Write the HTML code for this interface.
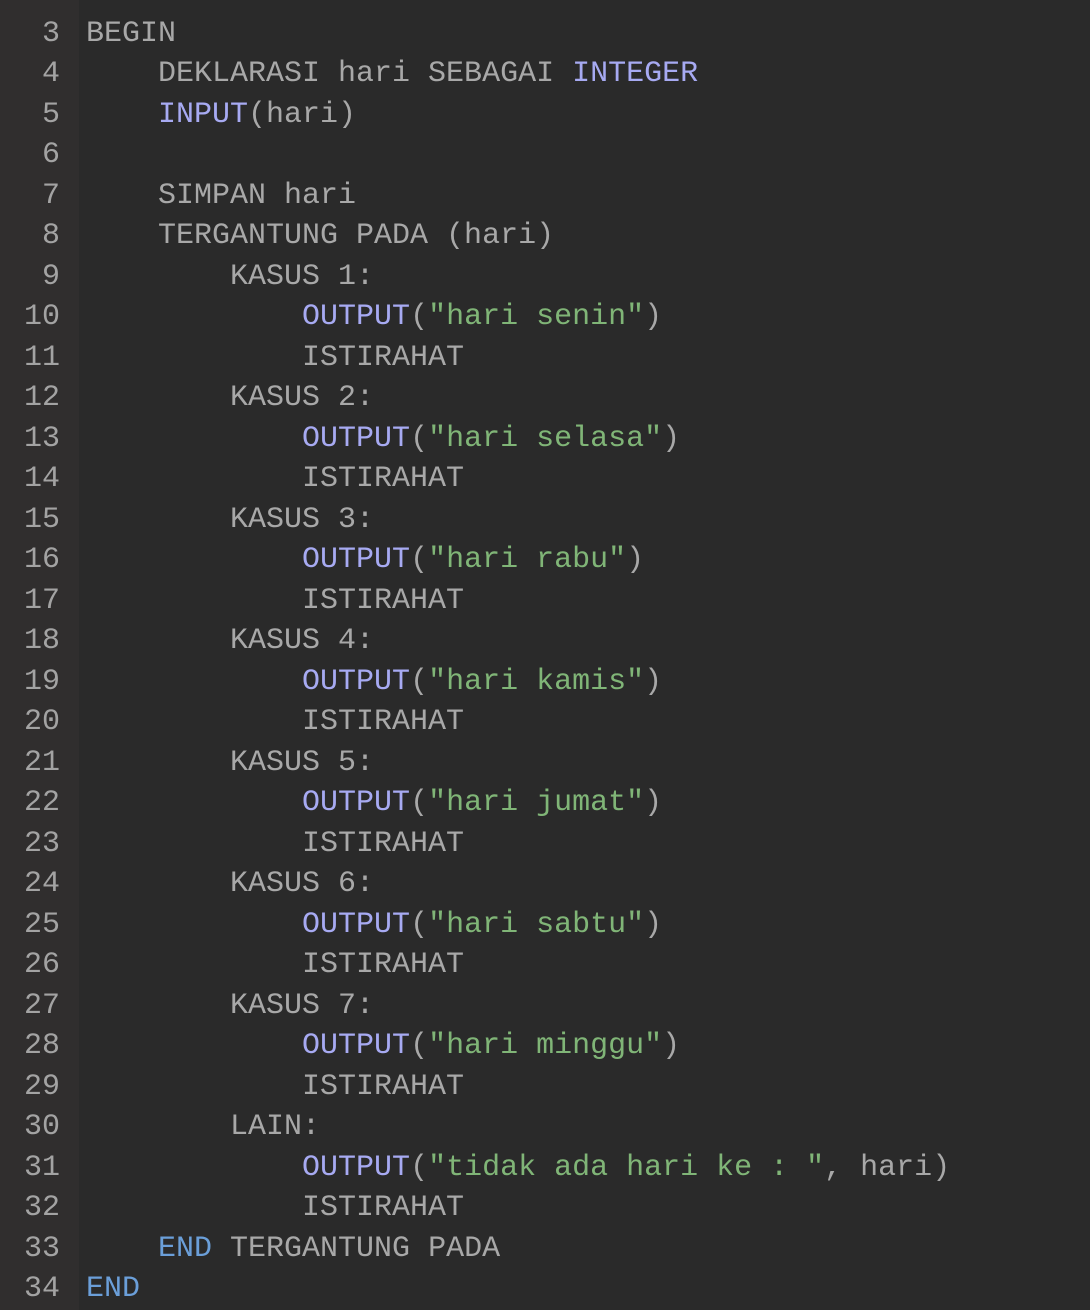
<!DOCTYPE html>
<html><head><style>
body{margin:0;width:1090px;height:1310px;overflow:hidden;background:#2a2a2a;}
.g{position:absolute;left:0;top:0;width:79px;height:1310px;background:#302e2e;}
.c{position:absolute;left:0;top:-27px;font-family:"Liberation Mono",monospace;font-size:30px;line-height:40.5px;color:#a8a8a8;white-space:pre;}
.n{display:inline-block;width:60px;text-align:right;margin-right:26px;color:#a3a3a3;}
.k{color:#a7aaf2}.s{color:#80b577}.e{color:#6b9fd9}
</style></head><body><div class="g"></div>
<div class="c"><span class="n">2</span>
<span class="n">3</span>BEGIN
<span class="n">4</span>    DEKLARASI hari SEBAGAI <span class="k">INTEGER</span>
<span class="n">5</span>    <span class="k">INPUT</span>(hari)
<span class="n">6</span>
<span class="n">7</span>    SIMPAN hari
<span class="n">8</span>    TERGANTUNG PADA (hari)
<span class="n">9</span>        KASUS 1:
<span class="n">10</span>            <span class="k">OUTPUT</span>(<span class="s">"hari senin"</span>)
<span class="n">11</span>            ISTIRAHAT
<span class="n">12</span>        KASUS 2:
<span class="n">13</span>            <span class="k">OUTPUT</span>(<span class="s">"hari selasa"</span>)
<span class="n">14</span>            ISTIRAHAT
<span class="n">15</span>        KASUS 3:
<span class="n">16</span>            <span class="k">OUTPUT</span>(<span class="s">"hari rabu"</span>)
<span class="n">17</span>            ISTIRAHAT
<span class="n">18</span>        KASUS 4:
<span class="n">19</span>            <span class="k">OUTPUT</span>(<span class="s">"hari kamis"</span>)
<span class="n">20</span>            ISTIRAHAT
<span class="n">21</span>        KASUS 5:
<span class="n">22</span>            <span class="k">OUTPUT</span>(<span class="s">"hari jumat"</span>)
<span class="n">23</span>            ISTIRAHAT
<span class="n">24</span>        KASUS 6:
<span class="n">25</span>            <span class="k">OUTPUT</span>(<span class="s">"hari sabtu"</span>)
<span class="n">26</span>            ISTIRAHAT
<span class="n">27</span>        KASUS 7:
<span class="n">28</span>            <span class="k">OUTPUT</span>(<span class="s">"hari minggu"</span>)
<span class="n">29</span>            ISTIRAHAT
<span class="n">30</span>        LAIN:
<span class="n">31</span>            <span class="k">OUTPUT</span>(<span class="s">"tidak ada hari ke : "</span>, hari)
<span class="n">32</span>            ISTIRAHAT
<span class="n">33</span>    <span class="e">END</span> TERGANTUNG PADA
<span class="n">34</span><span class="e">END</span></div>
</body></html>
